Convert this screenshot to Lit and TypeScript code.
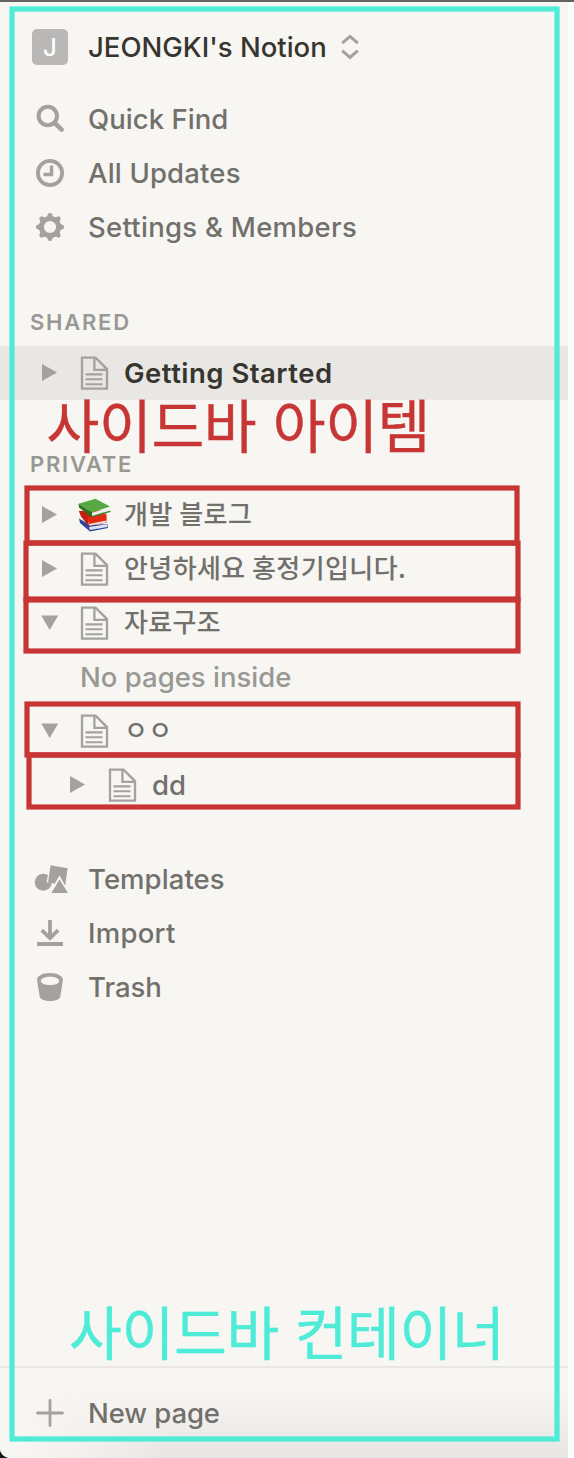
import { LitElement, html, svg, css } from "lit";
import { customElement } from "lit/decorators.js";

const icons = {
  search: svg`<circle cx="15.8" cy="15" r="9.2" fill="none" stroke="currentColor" stroke-width="4"/><path d="M22.4 21.6L29.6 28.6" stroke="currentColor" stroke-width="4.6" stroke-linecap="round"/>`,
  clock: svg`<circle cx="18" cy="18" r="12.1" fill="none" stroke="currentColor" stroke-width="3.8"/><path d="M19.5 10.5V19.5H11.5" fill="none" stroke="currentColor" stroke-width="3.4"/>`,
  gear: svg`<circle cx="18" cy="18" r="8.6" fill="none" stroke="currentColor" stroke-width="5"/>${[0, 45, 90, 135, 180, 225, 270, 315].map(
    (a) => svg`<path d="M14.5 9L16 5Q16.4 4 18 4Q19.6 4 20 5L21.5 9Z" fill="currentColor" transform="rotate(${a} 18 18)"/>`
  )}`,
  templates: svg`<circle cx="11.3" cy="21.3" r="8.5" fill="currentColor"/><path d="M18 3.4L36 6.6L34 24.5L14.6 21.2Z" fill="#f7f6f3"/><path d="M18.6 4.2L35.6 7.2L33.2 24.5L16 21.4Z" fill="currentColor"/><path d="M27.5 14.5L38 33H16.5Z" fill="#f7f6f3"/><path d="M27.5 18.6L36 32H19.4Z" fill="currentColor"/>`,
  download: svg`<path d="M18 5V22M9.8 15.2L18 23.2L26.2 15.2" fill="none" stroke="currentColor" stroke-width="3.8"/><path d="M5 29H31" stroke="currentColor" stroke-width="4"/>`,
  trash: svg`<path fill-rule="evenodd" fill="currentColor" d="M18 4C25 4 31 6.8 31 10.8L28.3 27.5C27.8 30.3 23.5 32 18 32S8.2 30.3 7.7 27.5L5 10.8C5 6.8 11 4 18 4ZM18 7.8C12.8 7.8 8.8 9.6 8.8 12S12.8 16.1 18 16.1S27.2 14.3 27.2 12S23.2 7.8 18 7.8Z"/>`,
  plus: svg`<path d="M18 5.5V30.5M5.5 18H30.5" stroke="currentColor" stroke-width="2.8" stroke-linecap="round"/>`,
};

const page = svg`<path d="M2 1.6H15.5L27 13.1V32.6H2Z" fill="none" stroke="currentColor" stroke-width="2.3"/><path d="M14.4 1.6V13.8H27" fill="none" stroke="currentColor" stroke-width="2.3"/><path d="M5.5 18.4H22.5M5.5 23.3H22.5M5.5 28.2H22.5" stroke="currentColor" stroke-width="2.1"/>`;

const books = svg`<path d="M-1 20.5L0 25L10 33.5L28 30L27.5 26L10 27Z" fill="#2d479e"/><path d="M9 29L27 26.3L27.5 29L10 32Z" fill="#dfe4f0"/>
  <path d="M-1.2 13L1 18.5L8 27.5L9 22L26 16L20 12Z" fill="#c5200f"/><path d="M8 20L26.5 16L26.8 24.5L9 28Z" fill="#e52a12"/><path d="M9 26L26.5 22.5L26.8 24.3L9.5 27.7Z" fill="#f3e4de"/>
  <path d="M-1.5 5.8L15.5 .8L30 8.6L12 14.6Z" fill="#58a843"/><path d="M-1.5 5.8L12 14.6L11.5 19L-1 9.5Z" fill="#28731f"/><path d="M12 14.8L29.5 9.2L29 13L12 18.2Z" fill="#eef1e9"/><path d="M11.5 18L30.5 12.6V14L12 19.3Z" fill="#3c8f2e"/>`;

@customElement("app-root")
export class AppRoot extends LitElement {
  static styles = css`
    :host {
      display: block;
      position: relative;
      width: 574px;
      height: 1458px;
      overflow: hidden;
      background: #fff;
      font-family: Inter, "Noto Sans CJK KR", sans-serif;
      font-size: 27.5px;
      font-weight: 500;
      color: #72706b;
    }
    * { box-sizing: border-box; }
    svg { display: block; flex: none; overflow: visible; }
    .frame { border-top: 2px solid #636363; height: 1458px; }
    .backdrop { background: #101817; width: 568px; height: 1456px; }
    .sidebar {
      width: 568px;
      height: 1456px;
      display: flex;
      flex-direction: column;
      background: #f7f6f3;
      border-bottom-left-radius: 10px;
    }
    .head { height: 90px; display: flex; align-items: center; padding-left: 32px; color: #37352f; }
    .avatar {
      width: 36px; height: 36px; border-radius: 5px; background: #b9b8b6; color: #fff;
      font-size: 24px; line-height: 1; display: grid; place-items: center; margin-right: 20px; padding-top: 2px;
    }
    .name { white-space: nowrap; }
    .chev { margin-left: 14px; color: #a3a29e; }
    .row { height: 54px; display: flex; align-items: center; padding-left: 32px; white-space: nowrap; flex: none; }
    .row .ico { width: 36px; height: 36px; margin-right: 20px; color: #a3a29e; }
    .label {
      font-size: 22px; font-weight: 600; color: #999893; letter-spacing: 1.75px;
      padding-left: 30px; height: 28px; line-height: 28px;
    }
    .shared { margin-top: 54px; margin-bottom: 10px; }
    .private { margin-top: 50px; margin-bottom: 10px; }
    .item { height: 54px; display: flex; align-items: center; padding-left: 42px; flex: none; white-space: nowrap; color: #72706b; }
    .item .arrow { width: 16px; height: 18px; margin-right: 22px; color: #a3a29e; }
    .item .pg { width: 29px; height: 35px; margin-right: 15px; color: #a3a29e; }
    .active { background: #e8e7e4; color: #37352f; font-weight: 600; }
    .nested { padding-left: 70px; }
    .ko { font-family: "Noto Sans CJK KR", sans-serif; font-size: 26px; line-height: 38px; padding-bottom: 4px; }
    .empty { height: 54px; line-height: 54px; padding-left: 80px; color: #999893; flex: none; }
    .tools { margin-top: 40px; }
    .foot {
      margin-top: auto; height: 92px; border-top: 2px solid #e8e7e4; display: flex; align-items: center;
      border-bottom-left-radius: 10px;
      background: linear-gradient(to right, #f7f6f3 4%, #f7f6f300 30%), linear-gradient(to bottom, #f7f6f3 20%, #e8e6e4);
    }
    .notes { position: absolute; inset: 0; }
    .big { font-family: "Noto Sans CJK KR", sans-serif; font-weight: 400; stroke-width: 0.4; }
  `;

  private row(icon: unknown, text: string, ls = 0) {
    return html`<div class="row"><svg class="ico" viewBox="0 0 36 36">${icon}</svg><span style="letter-spacing:${ls}px">${text}</span></div>`;
  }

  private item(text: string, o: { open?: boolean; cls?: string; ko?: boolean; icon?: unknown; ls?: number } = {}) {
    return html`<div class="item ${o.cls ?? ""}">
      <svg class="arrow" viewBox="0 0 16 18">
        <path fill="currentColor" d=${o.open ? "M-.8 1.4H16.2L7.7 16Z" : "M0 0L15 8.5L0 17Z"} />
      </svg>
      <svg class="pg" viewBox="0 0 29 35">${o.icon ?? page}</svg>
      <span class=${o.ko ? "ko" : ""} style="letter-spacing:${o.ls ?? 0}px">${text}</span>
    </div>`;
  }

  private box(x: number, y: number, r: number, b: number, color: string) {
    return svg`<rect x=${x} y=${y} width=${r - x} height=${b - y} fill="none" stroke=${color} stroke-width="5.2"/>`;
  }

  render() {
    const red = "#c73634";
    const teal = "#4eebd7";
    return html`
      <div class="frame">
        <div class="backdrop">
          <div class="sidebar">
            <div class="head">
              <div class="avatar">J</div>
              <span class="name">JEONGKI's Notion</span>
              <svg class="chev" width="18" height="26" viewBox="0 0 18 26">
                <path d="M1.2 9.2L9 2.4L16.8 9.2M1.2 16.6L9 23.4L16.8 16.6" fill="none" stroke="currentColor" stroke-width="3" />
              </svg>
            </div>
            ${this.row(icons.search, "Quick Find", 0.05)} ${this.row(icons.clock, "All Updates", 0.18)}
            ${this.row(icons.gear, "Settings & Members", 0.27)}
            <div class="label shared">SHARED</div>
            ${this.item("Getting Started", { cls: "active", ls: 0.48 })}
            <div class="label private">PRIVATE</div>
            ${this.item("개발 블로그", { ko: true, icon: books, ls: 0.5 })}
            ${this.item("안녕하세요 홍정기입니다.", { ko: true, ls: 0.42 })}
            ${this.item("자료구조", { ko: true, open: true, ls: 0.3 })}
            <div class="empty">No pages inside</div>
            ${this.item("ㅇㅇ", { ko: true, open: true, ls: 0.4 })}
            ${this.item("dd", { cls: "nested" })}
            <div class="tools">
              ${this.row(icons.templates, "Templates", 0.08)} ${this.row(icons.download, "Import", 0.25)}
              ${this.row(icons.trash, "Trash")}
            </div>
            <div class="foot">${this.row(icons.plus, "New page", -0.1)}</div>
          </div>
        </div>
      </div>
      <svg class="notes" width="574" height="1458" viewBox="0 0 574 1458">
        ${this.box(12, 9, 557, 1439, teal)} ${this.box(27, 488, 517, 543, red)}
        ${this.box(26, 543, 518, 599, red)} ${this.box(26, 600, 518, 651, red)}
        ${this.box(27, 704, 518, 755, red)} ${this.box(29, 755, 518, 807, red)}
        <text class="big" x="46.5" y="448" font-size="57.5" word-spacing="4" textLength="384" fill=${red} stroke=${red}>사이드바 아이템</text>
        <text class="big" x="69" y="1355" font-size="57.5" word-spacing="3" textLength="436" fill=${teal} stroke=${teal}>사이드바 컨테이너</text>
      </svg>
    `;
  }
}
